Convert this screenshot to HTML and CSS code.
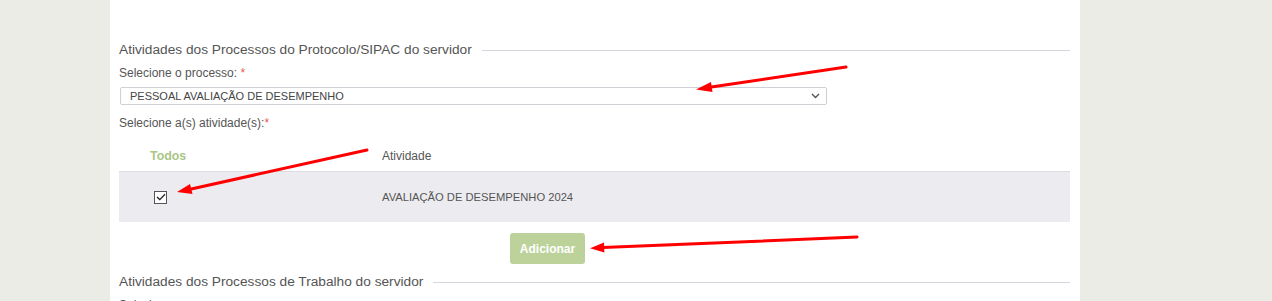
FILE: index.html
```html
<!DOCTYPE html>
<html lang="pt-BR">
<head>
<meta charset="utf-8">
<title>Atividades</title>
<link rel="stylesheet" href="styles.css">
</head>
<body>
<div class="page">
  <section class="group first">
    <div class="legend"><span class="legend-text">Atividades dos Processos do Protocolo/SIPAC do servidor</span><span class="legend-line"></span></div>
    <div class="label">Selecione o processo: <span class="req">*</span></div>
    <div class="select">
      <span>PESSOAL AVALIAÇÃO DE DESEMPENHO</span>
      <svg class="chev" width="9" height="6" viewBox="0 0 9 6"><path d="M1 1 L4.5 4.5 L8 1" fill="none" stroke="#555" stroke-width="1.4"/></svg>
    </div>
    <div class="label label2">Selecione a(s) atividade(s):<span class="req">*</span></div>
    <div class="table">
      <div class="thead">
        <div class="col-check th-todos">Todos</div>
        <div class="col-text">Atividade</div>
      </div>
      <div class="trow">
        <div class="col-check"><span class="checkbox"><svg width="10" height="8" viewBox="0 0 10 8"><path d="M1 4 L3.8 6.6 L9 1.2" fill="none" stroke="#222" stroke-width="1.3"/></svg></span></div>
        <div class="col-text">AVALIAÇÃO DE DESEMPENHO 2024</div>
      </div>
    </div>
    <div class="actions"><button class="btn">Adicionar</button></div>
  </section>
  <section class="group">
    <div class="legend"><span class="legend-text">Atividades dos Processos de Trabalho do servidor</span><span class="legend-line"></span></div>
    <div class="label">Selecione o processo:</div>
  </section>
</div>
<svg class="arrows" width="1272" height="301" viewBox="0 0 1272 301">
  <g stroke="#f00" stroke-width="3" stroke-linecap="round" fill="#f00">
    <line x1="846" y1="67" x2="708" y2="87.5"/>
    <polygon points="696,89.5 711,82 712.5,92" stroke="none"/>
    <line x1="367" y1="150" x2="189" y2="189.5"/>
    <polygon points="177,192 190,184 192.5,194" stroke="none"/>
    <line x1="857" y1="237" x2="603" y2="247.6"/>
    <polygon points="590,248.2 604,242.6 604.4,252.6" stroke="none"/>
  </g>
</svg>
</body>
</html>
```
FILE: styles.css
```css
html, body {
  margin: 0;
  padding: 0;
}
body {
  background: #ecece6;
  font-family: Tahoma, "Liberation Sans", Arial, sans-serif;
  color: #555;
  height: 301px;
  overflow: hidden;
  position: relative;
}
.page {
  width: 951px;
  margin-left: 110px;
  padding: 40px 10px 0 9px;
  background: #fff;
  height: 261px;
}
.legend {
  display: flex;
  align-items: center;
  height: 18px;
}
.legend-text {
  font-size: 13.7px;
  color: #555;
  white-space: nowrap;
  padding-right: 10px;
}
.legend-line {
  flex: 1;
  border-top: 1px solid #d6d6de;
  margin-top: 3px;
}
.label {
  font-size: 12px;
  color: #555;
  margin-top: 8px;
  height: 15px;
  line-height: 15px;
}
.req {
  color: #e85a5a;
}
.select {
  margin: 6px 0 0 1px;
  width: 696px;
  height: 16px;
  border: 1px solid #cfcfd6;
  border-radius: 2px;
  display: flex;
  align-items: center;
  justify-content: space-between;
  padding: 0 0 0 9px;
  box-sizing: content-box;
  font-size: 11px;
  color: #444;
}
.select .chev {
  margin-right: 6px;
}
.label2 {
  margin-top: 11px;
}
.table {
  margin-top: 10px;
}
.thead {
  display: flex;
  align-items: center;
  height: 30px;
  border-bottom: 1px solid #dcdce2;
  font-size: 12px;
}
.trow {
  display: flex;
  align-items: center;
  height: 50px;
  background: #ececf0;
  font-size: 11.2px;
}
.col-check {
  width: 263px;
  box-sizing: border-box;
  padding-left: 31px;
}
.th-todos {
  color: #a9c684;
  font-weight: bold;
  font-size: 12.4px;
}
.col-text {
  color: #555;
}
.trow .col-check {
  padding-left: 35px;
  display: flex;
}
.checkbox {
  width: 11px;
  height: 11px;
  border: 1px solid #555;
  background: #fff;
  display: flex;
  align-items: center;
  justify-content: center;
}
.actions {
  display: flex;
  justify-content: flex-start;
  padding-top: 11px;
  padding-left: 391px;
  height: 50px;
  box-sizing: border-box;
}
.btn {
  width: 75px;
  height: 31px;
  border: none;
  border-radius: 3px;
  background: #bcd29a;
  color: #fff;
  font-family: inherit;
  font-size: 12px;
  font-weight: bold;
}
.group + .group .legend {
  margin-top: 0;
}
.arrows {
  position: absolute;
  left: 0;
  top: 0;
  pointer-events: none;
}
```
